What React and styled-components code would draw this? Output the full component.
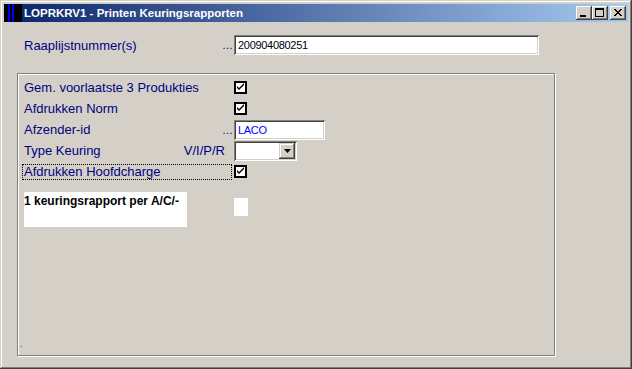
import React from "react";
import { createGlobalStyle, styled } from "styled-components";

const GlobalStyle = createGlobalStyle`
  html, body {
    margin: 0;
    padding: 0;
    background: #d4d0c8;
  }
  body {
    font-family: "Liberation Sans", Arial, sans-serif;
  }
`;

function Checkbox({ checked }) {
  return (
    <CheckBox>
      {checked && (
        <svg width="9" height="9" viewBox="0 0 9 9">
          <path d="M1 3 L1 5 L3 7 L8 2 L8 0 L3 5 Z" fill="#000" />
        </svg>
      )}
    </CheckBox>
  );
}

function App() {
  return (
    <>
      <GlobalStyle />
      <Window>
        <TitleBar>
          <AppIcon>
            <IconBar />
            <IconBar />
          </AppIcon>
          <Title>LOPRKRV1 - Printen Keuringsrapporten</Title>
          <Controls>
            <CtlButton>
              <svg width="16" height="14" viewBox="0 0 16 14">
                <rect x="4" y="9" width="6" height="2" fill="#000" />
              </svg>
            </CtlButton>
            <CtlButton>
              <svg width="16" height="14" viewBox="0 0 16 14">
                <rect x="3.5" y="2.5" width="8" height="8" fill="none" stroke="#000" />
                <rect x="3" y="2" width="9" height="2" fill="#000" />
              </svg>
            </CtlButton>
            <CtlButton $gap>
              <svg width="16" height="14" viewBox="0 0 16 14">
                <path d="M4 3 L11 10 M5 3 L12 10 M11 3 L4 10 M12 3 L5 10" stroke="#000" strokeWidth="1" />
              </svg>
            </CtlButton>
          </Controls>
        </TitleBar>

        <Content>
          <TopRow>
            <Label>
              <span>Raaplijstnummer(s)</span>
              <Suffix>…</Suffix>
            </Label>
            <TextField $width={305}>200904080251</TextField>
          </TopRow>

          <GroupBox>
            <Row>
              <Label>
                <span>Gem. voorlaatste 3 Produkties</span>
              </Label>
              <Checkbox checked />
            </Row>
            <Row>
              <Label>
                <span>Afdrukken Norm</span>
              </Label>
              <Checkbox checked />
            </Row>
            <Row>
              <Label>
                <span>Afzender-id</span>
                <Suffix>…</Suffix>
              </Label>
              <TextField $width={91} $blue>
                LACO
              </TextField>
            </Row>
            <Row>
              <Label>
                <span>Type Keuring</span>
                <Suffix $text>V/I/P/R</Suffix>
              </Label>
              <Combo>
                <ComboText />
                <ComboButton>
                  <svg width="7" height="4" viewBox="0 0 7 4">
                    <path d="M0 0 H7 L3.5 4 Z" fill="#000" />
                  </svg>
                </ComboButton>
              </Combo>
            </Row>
            <Row>
              <FocusLabel>Afdrukken Hoofdcharge</FocusLabel>
              <Checkbox checked />
            </Row>

            <NoteRow>
              <NoteBox>1 keuringsrapport per A/C/-</NoteBox>
              <SmallField />
            </NoteRow>

            <Dot>.</Dot>
          </GroupBox>
        </Content>
      </Window>
    </>
  );
}

export default App;

const Window = styled.div`
  box-sizing: border-box;
  width: 632px;
  height: 369px;
  padding: 4px;
  background: #d4d0c8;
  box-shadow: inset -1px -1px #404040, inset 1px 1px #d4d0c8,
    inset -2px -2px #808080, inset 2px 2px #ffffff;
  display: flex;
  flex-direction: column;
`;

const TitleBar = styled.div`
  height: 18px;
  display: flex;
  align-items: center;
  background: linear-gradient(90deg, #0a246a 0%, #a6caf0 100%);
`;

const AppIcon = styled.div`
  width: 18px;
  height: 18px;
  background: #000;
  display: flex;
  gap: 2px;
  padding-left: 4px;
  box-sizing: border-box;
`;

const IconBar = styled.div`
  width: 2px;
  height: 100%;
  background: #0000ff;
`;

const Title = styled.div`
  margin-left: 2px;
  color: #fff;
  font-weight: bold;
  font-size: 11.5px;
  flex: 1;
  white-space: nowrap;
`;

const Controls = styled.div`
  display: flex;
  align-items: center;
  padding-right: 2px;
`;

const CtlButton = styled.div`
  width: 16px;
  height: 14px;
  margin-left: ${(p) => (p.$gap ? "2px" : "0")};
  background: #d4d0c8;
  box-shadow: inset -1px -1px #404040, inset 1px 1px #ffffff,
    inset -2px -2px #808080, inset 2px 2px #d4d0c8;
  svg {
    display: block;
  }
`;

const Content = styled.div`
  flex: 1;
  display: flex;
  flex-direction: column;
`;

const TopRow = styled.div`
  display: flex;
  align-items: center;
  height: 20px;
  margin: 13px 0 0 20px;
`;

const Label = styled.div`
  width: 210px;
  display: flex;
  align-items: center;
  justify-content: space-between;
  color: #000080;
  font-size: 13px;
  white-space: nowrap;
`;

const Suffix = styled.span`
  padding-right: ${(p) => (p.$text ? "9px" : "1px")};
  font-size: ${(p) => (p.$text ? "13px" : "11px")};
`;

const TextField = styled.div`
  box-sizing: border-box;
  width: ${(p) => p.$width}px;
  height: 20px;
  padding: 3px 4px;
  background: #fff;
  color: ${(p) => (p.$blue ? "#0000ff" : "#000")};
  font-size: 11px;
  letter-spacing: -0.3px;
  line-height: 14px;
  box-shadow: inset 1px 1px #808080, inset -1px -1px #ffffff,
    inset 2px 2px #404040, inset -2px -2px #d4d0c8;
`;

const GroupBox = styled.div`
  box-sizing: border-box;
  width: 538px;
  height: 283px;
  margin: 18px 0 0 13px;
  padding: 3px 0 7px 6px;
  border: 1px solid #808080;
  box-shadow: inset 1px 1px #ffffff, 1px 1px #ffffff;
  display: flex;
  flex-direction: column;
`;

const Row = styled.div`
  display: flex;
  align-items: center;
  height: 21px;
`;

const CheckBox = styled.div`
  box-sizing: border-box;
  width: 13px;
  height: 13px;
  border: 2px solid #000;
  background: #fff;
  display: flex;
  align-items: center;
  justify-content: center;
  svg {
    display: block;
  }
`;

const Combo = styled.div`
  box-sizing: border-box;
  width: 63px;
  height: 20px;
  padding: 2px;
  display: flex;
  background: #fff;
  box-shadow: inset 1px 1px #808080, inset -1px -1px #ffffff,
    inset 2px 2px #404040, inset -2px -2px #d4d0c8;
`;

const ComboText = styled.div`
  flex: 1;
`;

const ComboButton = styled.div`
  width: 16px;
  height: 16px;
  background: #d4d0c8;
  display: flex;
  align-items: center;
  justify-content: center;
  box-shadow: inset -1px -1px #404040, inset 1px 1px #d4d0c8,
    inset -2px -2px #808080, inset 2px 2px #ffffff;
  svg {
    display: block;
  }
`;

const FocusLabel = styled.div`
  box-sizing: border-box;
  width: 210px;
  height: 16px;
  margin-left: -2px;
  margin-right: 2px;
  padding-left: 1px;
  border: 1px dotted #000;
  color: #000080;
  font-size: 13px;
  line-height: 14px;
  white-space: nowrap;
`;

const NoteRow = styled.div`
  display: flex;
  align-items: flex-start;
  margin-top: 10px;
`;

const NoteBox = styled.div`
  box-sizing: border-box;
  width: 163px;
  height: 35px;
  margin-right: 47px;
  padding-top: 2px;
  background: #fff;
  color: #000;
  font-size: 12px;
  font-weight: bold;
  white-space: nowrap;
`;

const SmallField = styled.div`
  width: 14px;
  height: 18px;
  margin-top: 6px;
  background: #fff;
`;

const Dot = styled.div`
  margin-top: auto;
  margin-left: -4px;
  color: #000080;
  font-size: 8px;
  line-height: 6px;
`;
